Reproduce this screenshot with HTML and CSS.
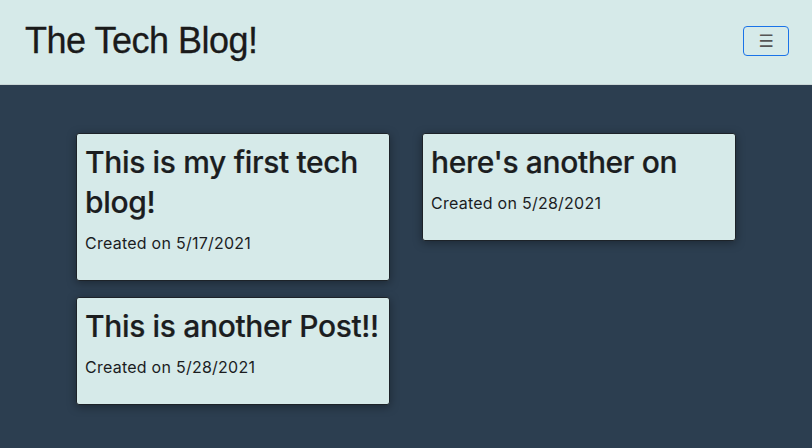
FILE: index.html
```html
<!DOCTYPE html>
<html lang="en">
<head>
<meta charset="utf-8">
<title>The Tech Blog!</title>
<link rel="stylesheet" href="styles.css">
</head>
<body>
<header class="topbar">
  <h1 class="brand">The Tech Blog!</h1>
  <button class="menu-btn" aria-label="Menu">&#9776;</button>
</header>
<main class="posts">
  <div class="col">
    <article class="card">
      <h2 class="card-title">This is my first tech blog!</h2>
      <p class="card-date">Created on 5/17/2021</p>
    </article>
    <article class="card">
      <h2 class="card-title">This is another Post!!</h2>
      <p class="card-date">Created on 5/28/2021</p>
    </article>
  </div>
  <div class="col">
    <article class="card">
      <h2 class="card-title">here's another on</h2>
      <p class="card-date">Created on 5/28/2021</p>
    </article>
  </div>
</main>
</body>
</html>
```
FILE: styles.css
```css
* { box-sizing: border-box; }
html, body { margin: 0; padding: 0; }
body {
  background: #2c3e50;
  font-family: Inter, "Noto Sans", sans-serif;
  color: #1b1d1f;
  height: 448px;
  overflow: hidden;
}
.topbar {
  height: 85px;
  background: #d6eae9;
  border-bottom: 1px solid #c9d6d6;
  display: flex;
  align-items: center;
  justify-content: space-between;
  padding: 0 23px 4px 25px;
}
.brand {
  margin: 0;
  font-family: "Liberation Sans", Arial, sans-serif;
  font-weight: 400;
  font-size: 36px;
  letter-spacing: -0.5px;
  color: #1a1a1a;
  transform: scaleY(1.05);
  -webkit-text-stroke: 0.3px #1a1a1a;
}
.menu-btn {
  width: 46px;
  height: 30px;
  margin-top: 2px;
  background: transparent;
  border: 1px solid #1a73e8;
  border-radius: 4px;
  color: #555;
  font-size: 17px;
  line-height: 1;
  padding: 0;
  font-family: "DejaVu Sans", sans-serif;
}
.posts {
  display: flex;
  justify-content: center;
  gap: 32px;
  padding-top: 48px;
}
.col {
  width: 314px;
  display: flex;
  flex-direction: column;
  gap: 16px;
}
.card {
  background: #d6eae9;
  border: 1px solid #1d2329;
  border-radius: 3px;
  padding: 8px 8px 25px;
  box-shadow: 0 2px 10px rgba(0, 0, 0, 0.35);
}
.card-title {
  margin: 0 0 9px;
  font-size: 30px;
  font-weight: 500;
  line-height: 40px;
  letter-spacing: -0.35px;
  -webkit-text-stroke: 0.2px #1b1d1f;
}
.card-date {
  margin: 0;
  font-size: 16px;
  line-height: 24px;
  letter-spacing: 0.25px;
}
```
